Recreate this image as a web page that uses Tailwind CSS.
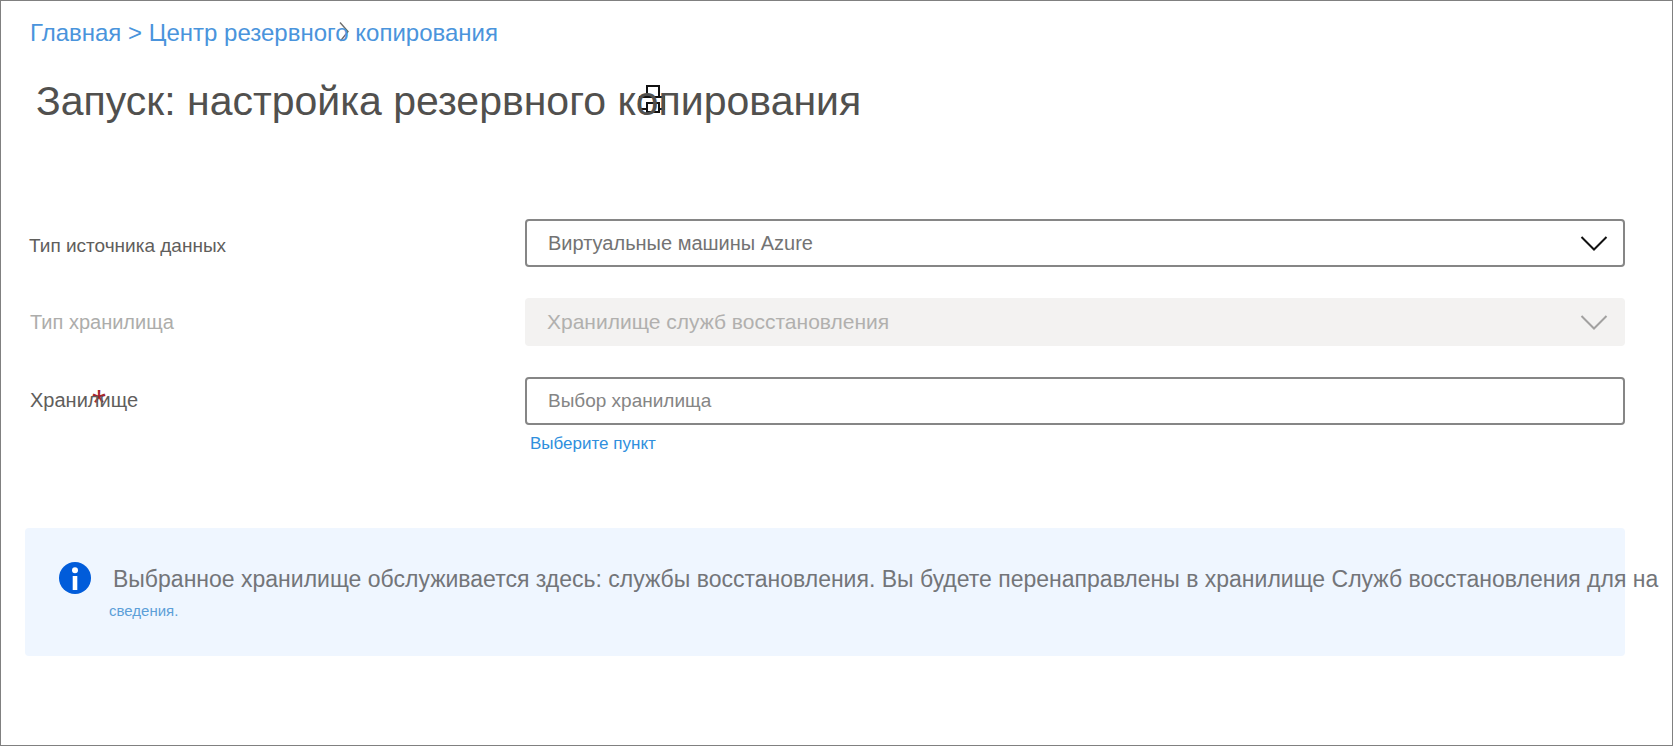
<!DOCTYPE html>
<html lang="ru">
<head>
<meta charset="utf-8">
<title>Запуск: настройка резервного копирования</title>
<script src="https://cdn.jsdelivr.net/npm/@tailwindcss/browser@4"></script>
</head>
<body class="bg-white font-['Liberation_Sans',Arial,sans-serif]">
<div class="min-h-screen overflow-hidden border border-[#808080] pt-4 pr-[47px] pl-6">
  <header>
    <nav aria-label="Навигация" class="relative pl-[5px] text-2xl leading-8 whitespace-nowrap text-[#4a94dc]">
      <svg class="absolute top-1 left-[314px] h-6 w-3" viewBox="0 0 12 24" fill="none" stroke="#6c6c6c" stroke-width="1.400" aria-hidden="true"><path d="M1 1.500L9 10.500L1.500 20"/></svg>
      <div class="relative"><a href="#">Главная</a> &gt; <a href="#">Центр резервного копирования</a></div>
    </nav>
    <div class="relative mt-6 pl-[11px]">
      <button type="button" aria-label="Печать" class="absolute top-3 left-[613px]">
        <svg class="h-7 w-7" viewBox="0 0 28 28" fill="none" stroke="#111" stroke-width="2" aria-hidden="true"><path d="M9 12V1H21V12M9 24H2V12H26V24H21M9 27V18H21V27Z"/></svg>
      </button>
      <h1 class="pointer-events-none relative text-[41px] leading-[56px] whitespace-nowrap text-[#51504e]">Запуск: настройка резервного копирования</h1>
    </div>
  </header>

  <form class="mt-[90px] grid grid-cols-[500px_1fr] gap-y-[31px] text-xl">
    <label for="source" class="pt-[13px] pl-1 text-[19px] leading-7 text-[#5f5e5c]">Тип источника данных</label>
    <div class="relative">
      <select id="source" class="h-12 w-full appearance-none rounded border-2 border-[#868686] bg-white pr-14 pl-[21px] text-[#737373]"><option>Виртуальные машины Azure</option></select>
      <svg class="pointer-events-none absolute top-4 right-[17px] h-4 w-7" viewBox="0 0 28 16" fill="none" stroke="#111" stroke-width="2" aria-hidden="true"><path d="M1.500 2L14 14.500L26.500 2"/></svg>
    </div>
    <label for="kind" class="pt-[10px] pl-[5px] text-[#adadab]">Тип хранилища</label>
    <div class="relative">
      <select id="kind" disabled class="h-12 w-full appearance-none rounded bg-[#f3f2f1] pr-14 pl-[22px] text-[21px] text-[#b1b0ae] opacity-100"><option>Хранилище служб восстановления</option></select>
      <svg class="pointer-events-none absolute top-4 right-[17px] h-4 w-7" viewBox="0 0 28 16" fill="none" stroke="#a2a1a0" stroke-width="2" aria-hidden="true"><path d="M1.500 2L14 14.500L26.500 2"/></svg>
    </div>
    <div class="pt-[9px] pl-[5px]">
      <label for="vault" class="relative text-[#5f5e5c]"><span class="absolute -top-[3px] left-[62px] text-4xl leading-none text-[#a4262c]" aria-hidden="true">*</span><span class="relative">Хранилище</span></label>
    </div>
    <div>
      <input id="vault" type="text" placeholder="Выбор хранилища" class="block h-12 w-full rounded border-2 border-[#868686] bg-white px-[21px] text-[19px] text-[#737373] placeholder:text-[#858585]">
      <a href="#" class="mt-[7px] ml-[5px] block w-fit text-[17px] leading-6 text-[#2f8fdd]">Выберите пункт</a>
    </div>
  </form>

  <section class="mt-[72px] flex h-32 items-start gap-[22px] rounded bg-[#eff6ff] pt-[34px] pl-[34px]">
    <svg class="h-8 w-8 shrink-0" viewBox="0 0 32 32" aria-hidden="true"><circle cx="16" cy="16" r="16" fill="#015cda"/><circle cx="16" cy="8.300" r="3" fill="#fff"/><path d="M13.700 14H18.300V28H13.700Z" fill="#fff"/></svg>
    <div class="pt-px whitespace-nowrap">
      <p class="text-[23px] leading-8 text-[#737579]">Выбранное хранилище обслуживается здесь: службы восстановления. Вы будете перенаправлены в хранилище Служб восстановления для на</p>
      <a href="#" class="-ml-1 block text-[15px] leading-8 text-[#5c9fd8]">сведения.</a>
    </div>
  </section>
</div>
</body>
</html>
